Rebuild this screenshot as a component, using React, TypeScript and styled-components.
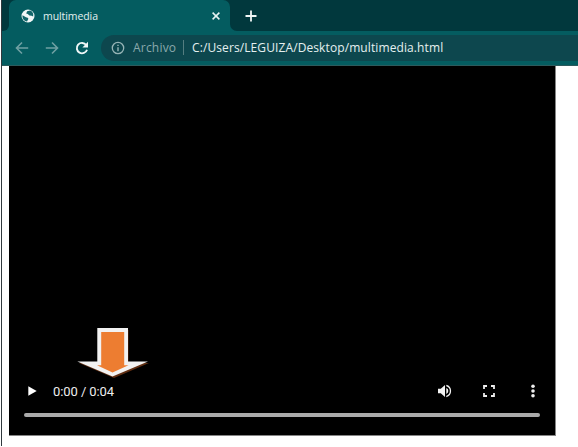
import React from "react";
import styled, { createGlobalStyle } from "styled-components";

const GlobalStyle = createGlobalStyle`
  * { box-sizing: border-box; }
  body { margin: 0; background: #fff; overflow: hidden; }
`;

const Window = styled.div`
  width: 578px;
  height: 447px;
  padding-left: 1px;
  background: #fff;
  font-family: "Open Sans", "Noto Sans", sans-serif;
`;

const Frame = styled.div`
  height: 446px;
  display: flex;
  flex-direction: column;
  border-left: 1px solid #30383d;
`;

const TabStrip = styled.header`
  height: 31px;
  flex: none;
  display: flex;
  background: #01383d;
`;

const StripEdge = styled.div`
  width: 7px;
  background: #045c60;
  &::before {
    content: "";
    display: block;
    height: 31px;
    background: #01383d;
    border-bottom-right-radius: 6px;
  }
`;

const Tab = styled.div`
  width: 221px;
  display: flex;
  align-items: center;
  padding: 0 9px 0 12px;
  background: #045c60;
  border-radius: 7px 7px 0 0;
`;

const TabTitle = styled.span`
  flex: 1;
  margin-left: 8px;
  color: #e2f0f0;
  font-size: 10.5px;
  line-height: 16px;
  letter-spacing: -0.08px;
`;

const StripRest = styled.div`
  flex: 1;
  background: #045c60;
`;

const StripFill = styled.div`
  height: 31px;
  display: flex;
  align-items: center;
  padding-left: 15px;
  background: #01383d;
  border-bottom-left-radius: 7px;
`;

const Toolbar = styled.nav`
  height: 35px;
  flex: none;
  display: flex;
  align-items: center;
  padding: 0 0 1px 13px;
  background: #045c60;
  border-bottom: 1px solid #2d5a5c;
`;

const NavIcons = styled.div`
  width: 86px;
  display: flex;
  align-items: center;
  gap: 16px;
`;

const AddressBar = styled.div`
  flex: 1;
  height: 26px;
  display: flex;
  align-items: center;
  padding-left: 10px;
  background: #0d474e;
  border-radius: 13px 0 0 13px;
  font-size: 12px;
  white-space: nowrap;
`;

const Scheme = styled.span`
  width: 44px;
  margin-left: 8px;
  color: #8aa9ac;
  letter-spacing: 0.2px;
`;

const Divider = styled.i`
  width: 1px;
  height: 15px;
  margin: 0 8px 0 6px;
  background: #547d80;
`;

const Url = styled.span`
  color: #e5f0f0;
  letter-spacing: 0.1px;
`;

const Page = styled.main`
  flex: 1;
  padding-left: 7px;
`;

const Video = styled.section`
  position: relative;
  width: 547px;
  height: 370px;
  display: flex;
  flex-direction: column;
  justify-content: flex-end;
  padding: 0 15px 18px 15px;
  background: #000;
  border-right: 1px solid #858585;
  border-bottom: 1px solid #858585;
`;

const Controls = styled.div`
  height: 24px;
  display: flex;
  align-items: center;
  padding-left: 4px;
`;

const Time = styled.span`
  flex: 1;
  margin-left: 16px;
  color: #eee;
  font: 13px Roboto, sans-serif;
  letter-spacing: -0.08px;
`;

const Actions = styled.div`
  display: flex;
  align-items: center;
  gap: 29px;
  margin-right: -1px;
`;

const Timeline = styled.div`
  height: 4px;
  margin-top: 10px;
  border-radius: 2px;
  background: #aaa;
`;

const Pointer = styled.svg`
  position: absolute;
  left: 66px;
  top: 261px;
`;

const Globe = () => (
  <svg width="14" height="14" viewBox="0 0 14 14">
    <circle cx="7" cy="7" r="6.5" fill="#f1f7f7" />
    <path d="M1.5 6.2 5 8.2 7.2 9v1.3L6 12.5C3 12 1.1 9.5 1.5 6.2ZM6.1 2.2l3-.7c1.5.6 2.7 1.8 3.1 3.4v2.7l-1.7-.9-2-.3L6.8 5 5.2 4.4Z" fill="#12666a" />
  </svg>
);

const Arrow = ({ forward = false }: { forward?: boolean }) => (
  <svg width="14" height="14" viewBox="0 0 14 14" fill="none" stroke="#6fa0a3" strokeWidth="1.6">
    <path d={forward ? "M.8 7h11.6M7 1.5 12.5 7 7 12.5" : "M13.2 7H1.6M7 1.5 1.5 7 7 12.5"} />
  </svg>
);

const Reload = () => (
  <svg width="14" height="14" viewBox="0 0 14 14">
    <path d="M11.2 4A5.2 5.2 0 1 0 12 8.7" fill="none" stroke="#f0f8f8" strokeWidth="1.9" />
    <path d="M13 .8v5.7H7.4Z" fill="#f0f8f8" />
  </svg>
);

const Info = () => (
  <svg width="14" height="14" viewBox="0 0 14 14" fill="none" stroke="#96b4b6">
    <circle cx="7" cy="7" r="5.7" strokeWidth="1.3" />
    <path d="M7 6.2v4M7 3.7v1.4" strokeWidth="1.4" />
  </svg>
);

export default function App() {
  return (
    <>
      <GlobalStyle />
      <Window>
        <Frame>
          <TabStrip>
            <StripEdge />
            <Tab>
              <Globe />
              <TabTitle>multimedia</TabTitle>
              <svg width="10" height="10" viewBox="0 0 10 10" stroke="#e6f3f3" strokeWidth="1.5">
                <path d="m1.6 1.6 6.8 6.8m0-6.8L1.6 8.4" />
              </svg>
            </Tab>
            <StripRest>
              <StripFill>
                <svg width="12" height="12" viewBox="0 0 12 12" stroke="#f0f6f6" strokeWidth="1.8">
                  <path d="M6 .5v11M.5 6h11" />
                </svg>
              </StripFill>
            </StripRest>
          </TabStrip>
          <Toolbar>
            <NavIcons>
              <Arrow />
              <Arrow forward />
              <Reload />
            </NavIcons>
            <AddressBar>
              <Info />
              <Scheme>Archivo</Scheme>
              <Divider />
              <Url>C:/Users/LEGUIZA/Desktop/multimedia.html</Url>
            </AddressBar>
          </Toolbar>
          <Page>
            <Video>
              <Controls>
                <svg width="9" height="10" viewBox="0 0 9 10" fill="#fff">
                  <path d="M.3.2 8.7 5 .3 9.8Z" />
                </svg>
                <Time>0:00 / 0:04</Time>
                <Actions>
                  <svg width="16" height="16" viewBox="0 0 16 16" fill="#f3f3f3">
                    <path d="M1 5.7h2.8L8 2v12L3.8 10.3H1Z" />
                    <path d="M9.3 5.1a3.1 3.1 0 0 1 0 5.8ZM9.3 1.8v1.5a4.9 4.9 0 0 1 0 9.4v1.5a6.4 6.4 0 0 0 0-12.4Z" />
                  </svg>
                  <svg width="14" height="14" viewBox="0 0 14 14" fill="none" stroke="#eee" strokeWidth="1.8">
                    <path d="M5 2H2v3M9 2h3v3M2 9v3h3M12 9v3H9" />
                  </svg>
                  <svg width="16" height="16" viewBox="0 0 16 16" fill="#eee">
                    <circle cx="8" cy="3.2" r="1.8" />
                    <circle cx="8" cy="8" r="1.8" />
                    <circle cx="8" cy="12.8" r="1.8" />
                  </svg>
                </Actions>
              </Controls>
              <Timeline />
              <Pointer width="76" height="54" viewBox="0 0 76 54">
                <path d="M23 3h30.5v33H74L39 51 4 36h19Z" fill="#602e12" />
                <path d="M22.3 1H53v33.5h20L37.5 49.5 2.3 34.5h20Z" fill="#f2f2f2" />
                <path d="M26.2 5h23v33.2h4.3L37.5 45.5 22 38.2h4.2Z" fill="#ed7d31" />
              </Pointer>
            </Video>
          </Page>
        </Frame>
      </Window>
    </>
  );
}
